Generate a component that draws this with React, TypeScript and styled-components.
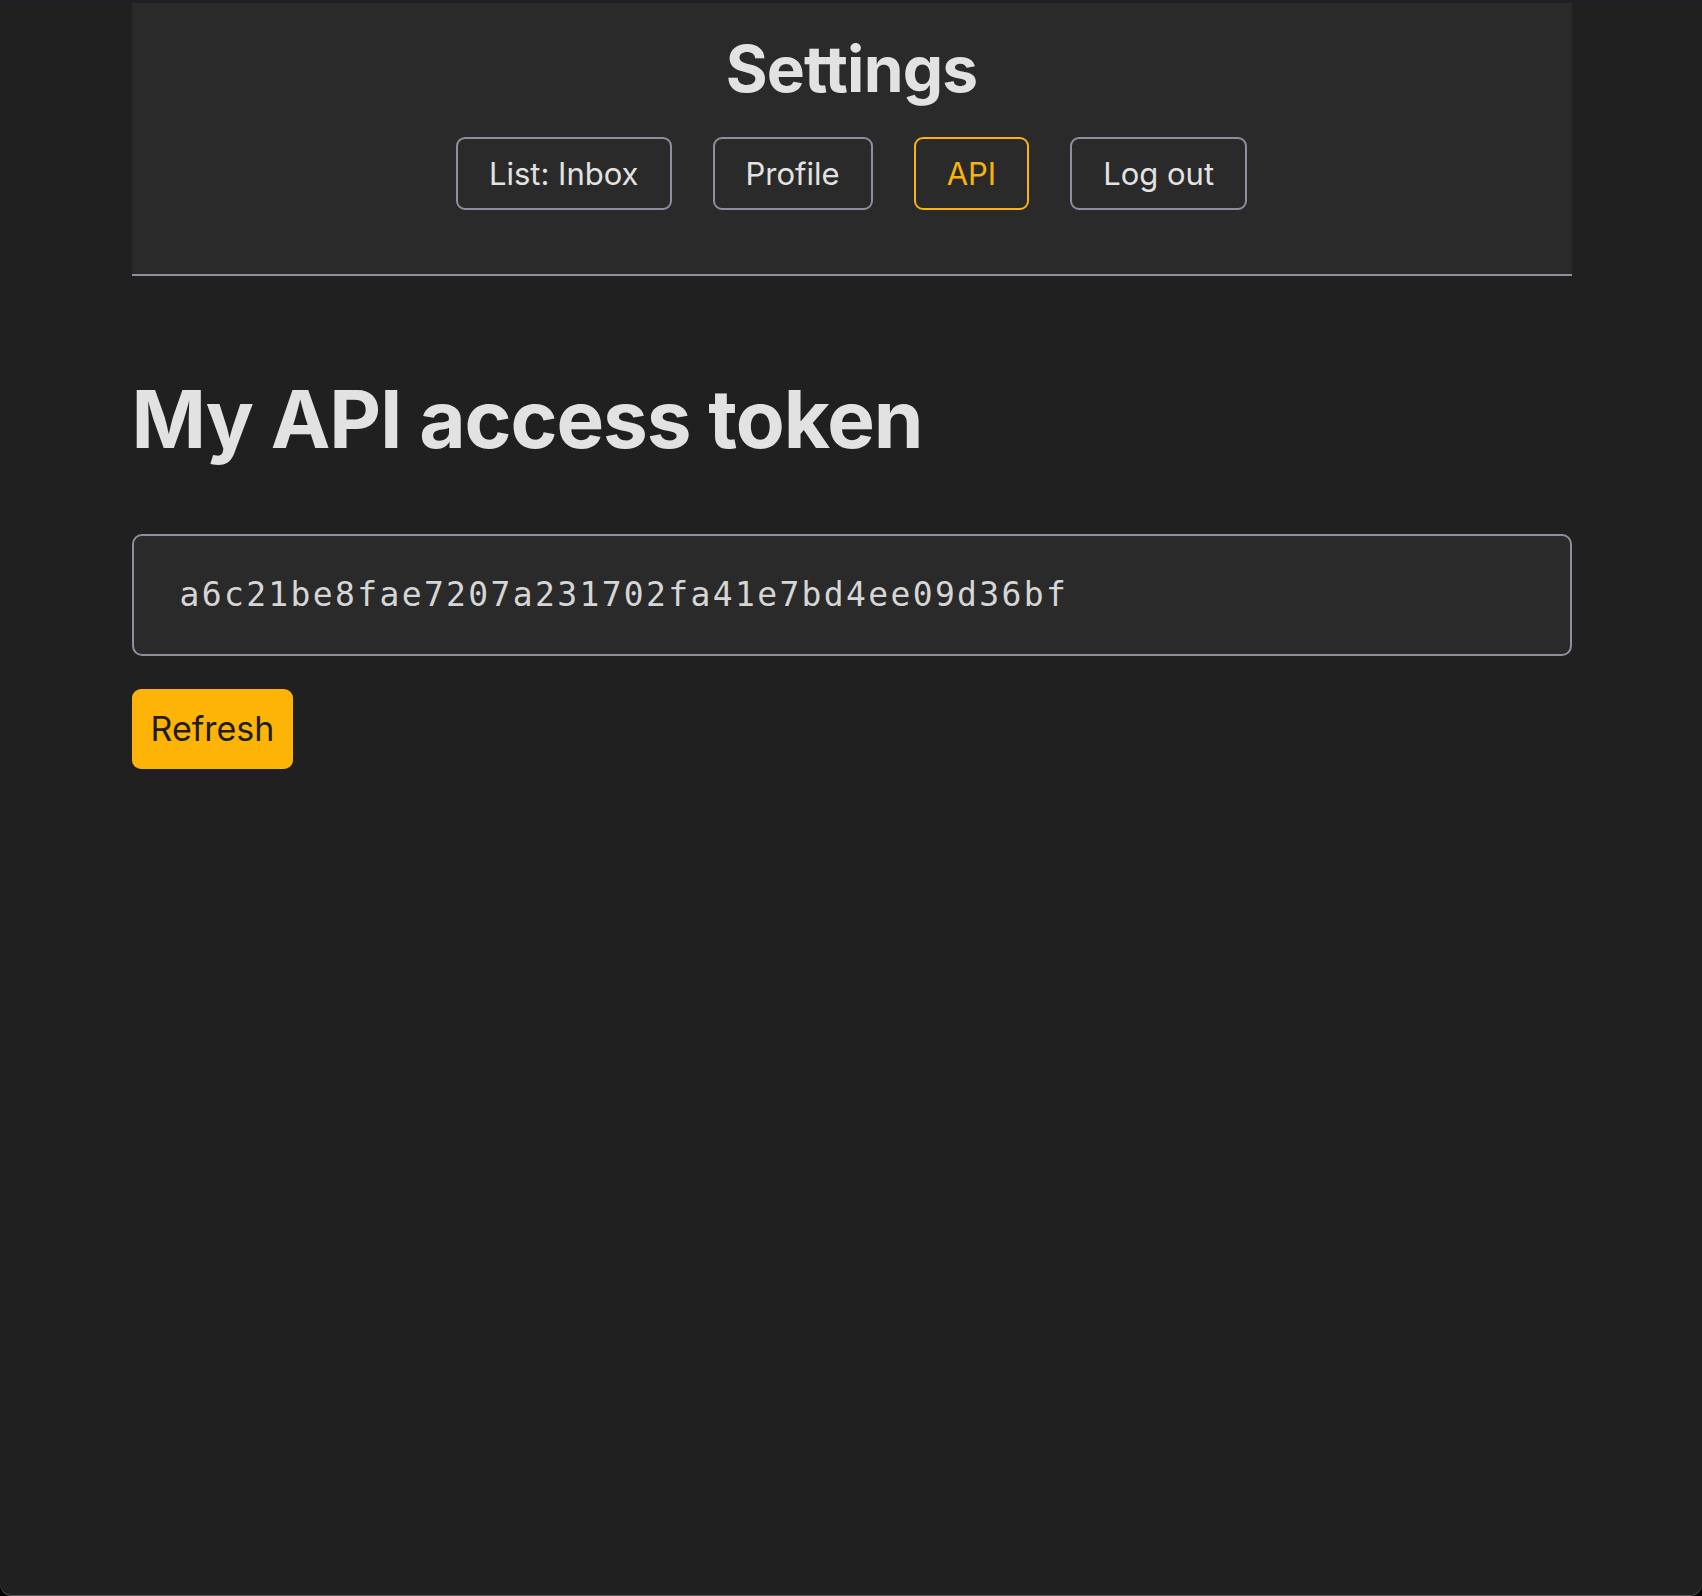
import { createGlobalStyle, styled } from "styled-components";

const GlobalStyle = createGlobalStyle`
  html, body {
    margin: 0;
    padding: 0;
    background: #000;
  }
  body {
    font-family: Inter, "Noto Sans", "Liberation Sans", sans-serif;
    color: #e2e2e2;
  }
`;

const Window = styled.div`
  min-height: 1596px;
  box-sizing: border-box;
  background: #202020;
  border-top: 3px solid #1d2025;
  border-radius: 0 0 12px 12px;
  box-shadow: inset 0 -1px 0 rgba(255, 255, 255, 0.25);
  overflow: hidden;
`;

const Column = styled.div`
  width: 1440px;
  margin: 0 auto;
  padding-left: 1px;
`;

const Header = styled.header`
  background: #2a2a2a;
  border-bottom: 2px solid #8e8ea0;
  padding: 28px 0 64px;
  display: flex;
  flex-direction: column;
  align-items: center;
  gap: 29px;
`;

const SiteTitle = styled.h1`
  margin: 0;
  font-size: 64px;
  line-height: 1.2;
  font-weight: 700;
  letter-spacing: -0.8px;
  color: #e2e2e2;
`;

const Nav = styled.nav`
  display: flex;
  gap: 41px;
`;

const NavButton = styled.button<{ $active?: boolean }>`
  font-family: inherit;
  font-size: 31px;
  line-height: 37px;
  padding: 16px 31px;
  border-radius: 9px;
  background: transparent;
  cursor: pointer;
  border: 2px solid ${(p) => (p.$active ? "#f7b40c" : "#8e8ea0")};
  color: ${(p) => (p.$active ? "#f7b40c" : "#e2e2e2")};
`;

const Main = styled.main`
  padding-top: 95px;
`;

const Heading = styled.h2`
  margin: 0 0 67px;
  font-size: 80px;
  line-height: 96px;
  font-weight: 700;
  letter-spacing: -1.1px;
  color: #e2e2e2;
`;

const TokenBox = styled.div`
  box-sizing: border-box;
  height: 122px;
  display: flex;
  align-items: center;
  padding: 0 46px;
  background: #2a2a2a;
  border: 2px solid #8e8ea0;
  border-radius: 10px;
  font-family: "DejaVu Sans Mono", "Liberation Mono", monospace;
  font-size: 33px;
  letter-spacing: 2.35px;
  color: #d6d6d6;
`;

const RefreshButton = styled.button`
  margin-top: 33px;
  font-family: inherit;
  font-size: 34px;
  line-height: 41px;
  padding: 19px 19px 20px;
  border: none;
  border-radius: 9px;
  background: #fdb406;
  color: #1e1e1e;
  cursor: pointer;
`;

export default function App() {
  return (
    <>
      <GlobalStyle />
      <Window>
        <Column>
          <Header>
            <SiteTitle>Settings</SiteTitle>
            <Nav>
              <NavButton>List: Inbox</NavButton>
              <NavButton>Profile</NavButton>
              <NavButton $active>API</NavButton>
              <NavButton>Log out</NavButton>
            </Nav>
          </Header>
          <Main>
            <Heading>My API access token</Heading>
            <TokenBox>a6c21be8fae7207a231702fa41e7bd4ee09d36bf</TokenBox>
            <RefreshButton>Refresh</RefreshButton>
          </Main>
        </Column>
      </Window>
    </>
  );
}
